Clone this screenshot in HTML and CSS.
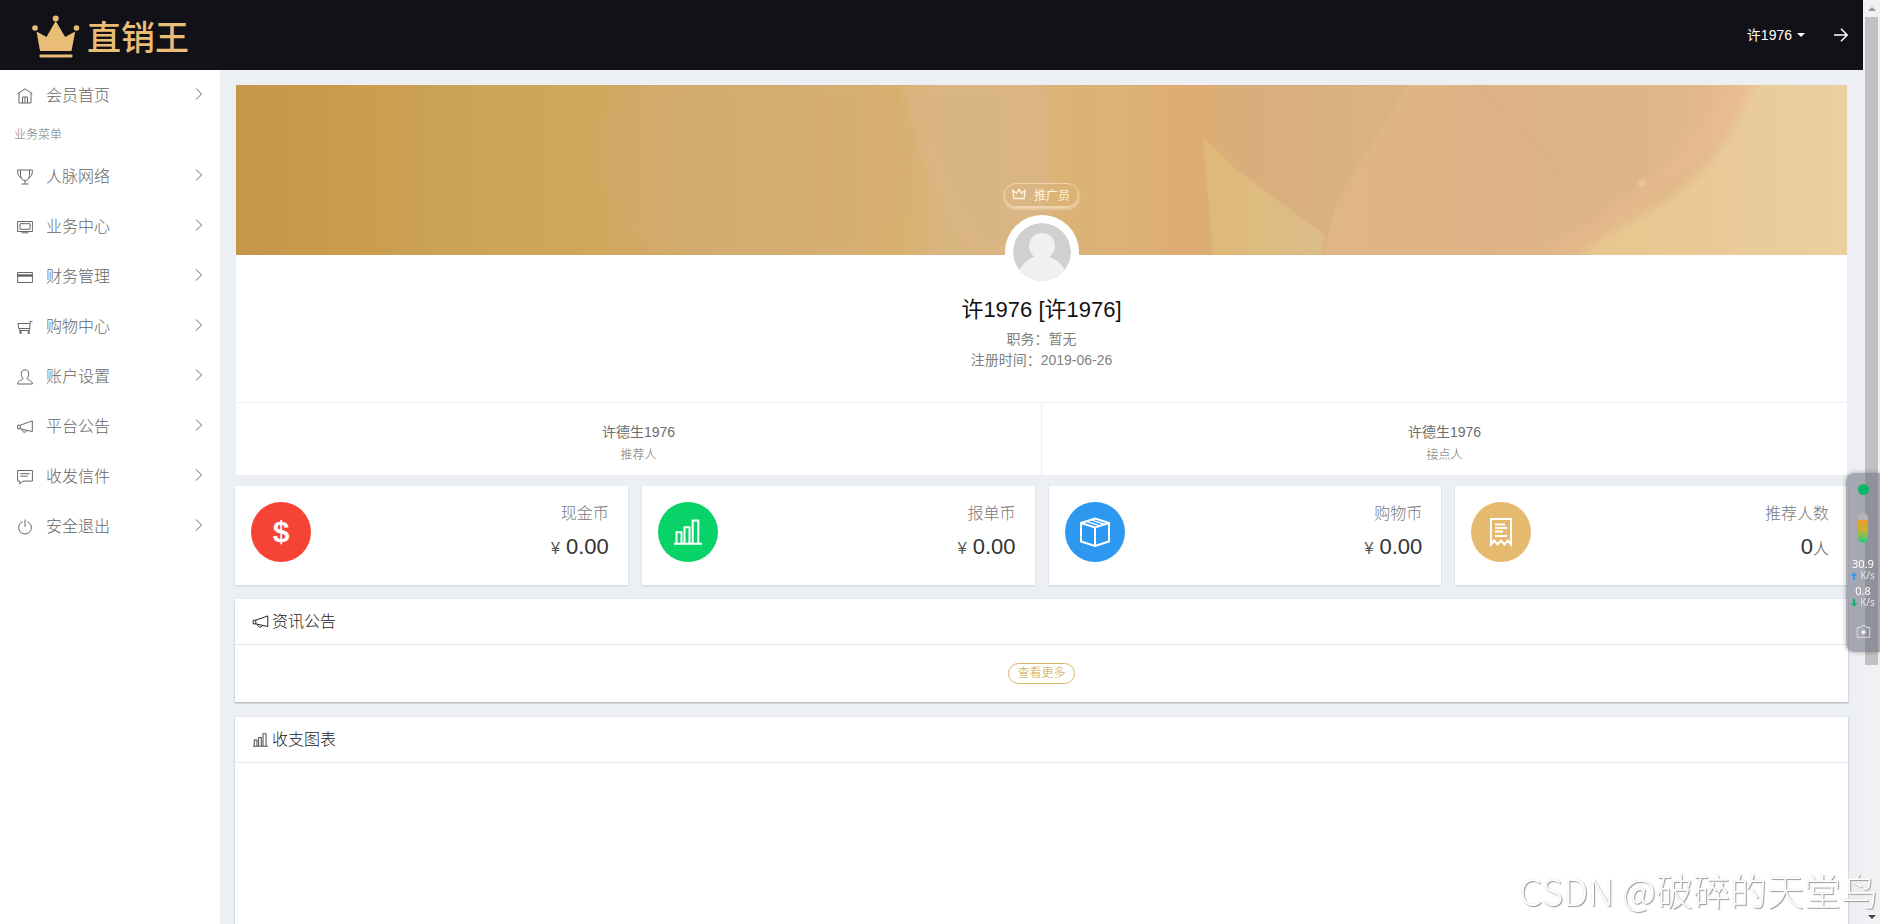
FILE: index.html
```html
<!DOCTYPE html>
<html lang="zh-CN">
<head>
<meta charset="utf-8">
<title>直销王</title>
<link rel="stylesheet" href="styles.css">
</head>
<body>
<svg class="defs" width="0" height="0" aria-hidden="true">
  <symbol id="chevron" viewBox="0 0 8 14"><path d="M1 1.500l5.500 5.500L1 12.500"/></symbol>
  <symbol id="horn" viewBox="0 0 16 14"><path d="M.7 5.200h2.600L15.300.9v10.600L3.300 8.900H.7zM3.300 5.200v3.700M5 9.500c.2 2 1.500 3 3.200 2.600 1-.3 1.500-.8 1.700-1.500"/></symbol>
  <symbol id="bars" viewBox="0 0 28 26"><path d="M0 24.700h28M2.500 24V13.200h5V24M10.500 24V8.200h5V24M18.700 24V1.500h5.600V24"/></symbol>
</svg>
<div class="window">
  <div class="app">
    <header class="topbar">
      <a class="brand" href="#">
        <svg class="crown" viewBox="0 0 48 44"><path d="M8 36L4.500 16.500 14.500 22 23.700 6l9.500 16 10-5.500L39.500 36z"/><circle cx="23.700" cy="3.500" r="3"/><circle cx="3" cy="13" r="2.800"/><circle cx="44.500" cy="13" r="2.800"/><rect x="7.500" y="39.500" width="33" height="3" rx="1"/></svg>
        <span>直销王</span>
      </a>
      <nav class="top-actions">
        <button class="user" type="button">许1976<i class="caret"></i></button>
        <button class="arrow" type="button" aria-label="展开"><svg viewBox="0 0 14 14"><path d="M0 7h13M7 .8L13.200 7 7 13.200"/></svg></button>
      </nav>
    </header>
    <div class="body">
      <aside class="sidebar">
        <a class="item home" href="#"><svg class="ico" viewBox="0 0 16 16"><path d="M.6 5.800L8 .8l7.400 5M2 5v10h12V5M5.500 15V9h5v6M8 9v6"/></svg><span>会员首页</span><svg class="chev"><use href="#chevron"/></svg></a>
        <h2 class="group">业务菜单</h2>
        <a class="item" href="#"><svg class="ico" viewBox="0 0 16 16"><path d="M3.500 1h9v5.500c0 3-2 5-4.500 5s-4.500-2-4.500-5zM3.500 1H.6c0 4 .8 7 4.400 8M12.500 1h2.900c0 4-.8 7-4.400 8M8 11.500V15M4.500 15h7"/></svg><span>人脉网络</span><svg class="chev"><use href="#chevron"/></svg></a>
        <a class="item" href="#"><svg class="ico" viewBox="0 0 16 16"><path d="M.6 2.500h14.800v10H.6zM3 4.700h10v5.600H3zM4.500 13.800h7"/></svg><span>业务中心</span><svg class="chev"><use href="#chevron"/></svg></a>
        <a class="item" href="#"><svg class="ico" viewBox="0 0 16 16"><path d="M.6 3.500h14.800v10H.6z"/><path d="M.6 6.500h14.800" stroke-width="2.500"/></svg><span>财务管理</span><svg class="chev"><use href="#chevron"/></svg></a>
        <a class="item" href="#"><svg class="ico" viewBox="0 0 16 16"><path d="M15.500 2.500h-2.200L12.500 11.500H2.800M.8 4.500h12.200M1 4.500l.8 5h10.800M2.800 9.500v3"/><path d="M2.500 13.500h2.200M10.700 13.500h2.200" stroke-width="2.400"/></svg><span>购物中心</span><svg class="chev"><use href="#chevron"/></svg></a>
        <a class="item" href="#"><svg class="ico" viewBox="0 0 16 16"><path d="M6 9.500C4.500 8 4.300 6 4.300 4.500 4.300 2 5.800.8 8 .8s3.700 1.200 3.700 3.700c0 1.500-.2 3.500-1.700 5 0 1.500 5.200 1.500 5.400 5.500H.6C.8 11 6 11 6 9.500z"/></svg><span>账户设置</span><svg class="chev"><use href="#chevron"/></svg></a>
        <a class="item" href="#"><svg class="ico horn"><use href="#horn"/></svg><span>平台公告</span><svg class="chev"><use href="#chevron"/></svg></a>
        <a class="item" href="#"><svg class="ico" viewBox="0 0 16 16"><path d="M.6 1.500h14.800v10.600H6L2.800 15v-2.900H.6zM3.300 4.700h9.400M3.300 7.200h7.500"/></svg><span>收发信件</span><svg class="chev"><use href="#chevron"/></svg></a>
        <a class="item" href="#"><svg class="ico" viewBox="0 0 16 16"><path d="M5.500 2.700a6.400 6.400 0 1 0 5 0M8 .5v7.500"/></svg><span>安全退出</span><svg class="chev"><use href="#chevron"/></svg></a>
      </aside>
      <main class="main">
        <section class="profile">
          <div class="hero">
            <svg class="hero-art" viewBox="0 0 1611 170" preserveAspectRatio="none" aria-hidden="true">
              <defs>
                <linearGradient id="base" x1="0" x2="1" y1="0" y2="0">
                  <stop offset="0" stop-color="#c4964a"/><stop offset=".07" stop-color="#ca9c4d"/><stop offset=".15" stop-color="#cca45a"/><stop offset=".22" stop-color="#d0a75b"/><stop offset=".28" stop-color="#d2ab6c"/><stop offset=".36" stop-color="#d5af73"/><stop offset=".41" stop-color="#d8b16e"/><stop offset=".44" stop-color="#d9b580"/><stop offset=".5" stop-color="#dbb57f"/><stop offset=".505" stop-color="#dbb376"/><stop offset=".55" stop-color="#dcb277"/><stop offset=".59" stop-color="#deac73"/><stop offset=".63" stop-color="#d9ae7c"/><stop offset=".7" stop-color="#dab181"/><stop offset="1" stop-color="#e3bc8e"/>
                </linearGradient>
                <linearGradient id="spike" x1="0" x2="1" y1="0" y2="0"><stop offset="0" stop-color="#dfb977"/><stop offset="1" stop-color="#ddbd89"/></linearGradient>
                <linearGradient id="skin" x1="0" x2="1" y1="0" y2="0"><stop offset="0" stop-color="#e0b687"/><stop offset=".3" stop-color="#deb486"/><stop offset=".6" stop-color="#deb587"/><stop offset=".82" stop-color="#e8bd90"/><stop offset="1" stop-color="#e9bf8e"/></linearGradient>
                <linearGradient id="light" x1="0" x2="1" y1="0" y2="0"><stop offset="0" stop-color="#e7c78a"/><stop offset=".5" stop-color="#e9ca98"/><stop offset="1" stop-color="#ecd0a2"/></linearGradient>
                <filter id="soft"><feGaussianBlur stdDeviation="5"/></filter>
                <filter id="edge"><feGaussianBlur stdDeviation="1"/></filter>
              </defs>
              <rect width="1611" height="170" fill="url(#base)"/>
              <path d="M380 0C350 60 355 130 420 170H640C700 120 690 50 665 0z" fill="#d5ab75" opacity=".3" filter="url(#soft)"/>
              <path d="M665 0C680 60 705 130 745 170H820L808 0z" fill="#dcb78b" opacity=".45" filter="url(#soft)"/>
              <path d="M967 52L1000 84 1089 150 1085 170H977z" fill="url(#spike)" filter="url(#edge)"/>
              <path d="M1170 0C1150 40 1125 75 1110 100S1094 145 1088 172H1620V-2z" fill="url(#skin)"/>
              <path d="M1240 0C1290 40 1330 90 1350 140" fill="none" stroke="#d4a97c" stroke-width="8" opacity=".2" filter="url(#soft)"/>
              <path d="M1490 0C1470 50 1420 100 1300 170H1360L1540 0z" fill="#efc093" opacity=".35" filter="url(#soft)"/>
              <path d="M1526 -20C1500 40 1480 80 1440 108S1360 148 1330 190H1640V-20z" fill="url(#light)" filter="url(#soft)"/>
              <circle cx="1406" cy="98" r="4" fill="#efcd9c" opacity=".7" filter="url(#edge)"/>
            </svg>
            <div class="badge"><svg viewBox="0 0 14 12"><path d="M1.800 10.500L1 2.500l3.500 2.700L7 1.300l2.500 3.900L13 2.500l-.8 8z"/></svg>推广员</div>
          </div>
          <svg class="avatar" viewBox="0 0 58 58" role="img" aria-label="头像"><clipPath id="round"><circle cx="29" cy="29" r="29"/></clipPath><g clip-path="url(#round)"><rect width="58" height="58" fill="#d0d0d0"/><ellipse cx="29" cy="54" rx="24" ry="21" fill="#f0f0f0"/><circle cx="29" cy="23" r="13" fill="#f0f0f0"/></g></svg>
          <h1 class="name">许1976 [许1976]</h1>
          <p class="meta">职务：暂无</p>
          <p class="meta">注册时间：2019-06-26</p>
          <div class="relations">
            <div><strong>许德生1976</strong><small>推荐人</small></div>
            <div><strong>许德生1976</strong><small>接点人</small></div>
          </div>
        </section>
        <section class="stats">
          <article class="stat"><div class="disc red">$</div><div class="figures"><h3>现金币</h3><p><span>¥</span> 0.00</p></div></article>
          <article class="stat"><div class="disc green"><svg width="28" height="26"><use href="#bars"/></svg></div><div class="figures"><h3>报单币</h3><p><span>¥</span> 0.00</p></div></article>
          <article class="stat"><div class="disc blue"><svg width="30" height="30" viewBox="0 0 30 30"><path d="M15 1.500L29 6v18.500L15 29 1 24.500V6zM1 6L15 10.500 29 6M15 10.500V29"/><path d="M6.500 4.300L20 8.800M11 2.800L24.500 7.300" stroke-width="1.400"/></svg></div><div class="figures"><h3>购物币</h3><p><span>¥</span> 0.00</p></div></article>
          <article class="stat"><div class="disc gold"><svg width="24" height="30" viewBox="0 0 24 30"><path d="M2 27.500V2h20v25.500l-3.300-4-3.300 4-3.400-4-3.400 4-3.300-4zM6 7.500h10M6 11h12M6 14.500h8M6 19h12"/></svg></div><div class="figures"><h3>推荐人数</h3><p>0<span>人</span></p></div></article>
        </section>
        <section class="panel">
          <h2><svg width="17" height="14"><use href="#horn"/></svg>资讯公告</h2>
          <div class="panel-body"><a class="more" href="#">查看更多</a></div>
        </section>
        <section class="panel chart">
          <h2><svg width="17" height="14"><use href="#bars"/></svg>收支图表</h2>
        </section>
      </main>
    </div>
  </div>
  <div class="scroll" aria-hidden="true"><i class="up"></i><i class="thumb"></i><i class="down"></i></div>
</div>
<aside class="monitor">
  <i class="dot"></i>
  <i class="tube"></i>
  <div class="rates">
    <b>30.9</b><span><svg viewBox="0 0 6 8"><path d="M3 0l3 4H4v4H2V4H0z" fill="#2f9be8"/></svg>K/s</span>
    <b>0.8</b><span><svg viewBox="0 0 6 8"><path d="M3 8l3-4H4V0H2v4H0z" fill="#12b268"/></svg>K/s</span>
  </div>
  <svg class="camera" viewBox="0 0 14 13"><path d="M.7 2.500h3.500l1-1.800h3.600l1 1.800h3.500v9.800H.7z"/><circle cx="7" cy="7.200" r="1.800"/></svg>
</aside>
<div class="watermark">CSDN @破碎的天堂鸟</div>
</body>
</html>
```
FILE: styles.css
```css
* { box-sizing: border-box; }
body, h1, h2, h3, p { margin: 0; font-weight: 300; }
body { font-family: "Liberation Sans", "Noto Sans CJK SC", sans-serif; font-size: 14px; color: #707070; overflow: hidden; }
a { color: inherit; text-decoration: none; }
button { font: inherit; color: inherit; background: none; border: 0; padding: 0; }
svg { fill: none; stroke: currentColor; }
.defs { position: absolute; }
.window { display: flex; height: 100vh; }
.app { flex: 1; min-width: 0; display: flex; flex-direction: column; }

.topbar { flex: none; height: 70px; background: #131118; color: #fff; display: flex; align-items: center; justify-content: space-between; padding: 0 15px 0 32px; }
.brand { display: flex; align-items: center; gap: 7px; padding-top: 3px; color: #e9bd76; font-size: 34px; font-weight: 500; line-height: 44px; }
.brand span { padding-top: 2px; }
.crown { width: 48px; height: 44px; fill: #e9bd76; stroke: none; }
.top-actions { display: flex; align-items: center; gap: 29px; }
.user { display: flex; align-items: center; gap: 5px; line-height: 20px; font-weight: 400; }
.caret { border: 4px solid transparent; border-top-color: #fff; border-bottom: 0; }
.arrow svg { display: block; width: 14px; height: 14px; stroke-width: 1.4; }

.body { flex: 1; min-height: 0; display: flex; background: #ecf0f4; }
.sidebar { flex: none; width: 220px; background: #fff; }
.item { display: flex; align-items: center; height: 50px; padding: 0 17px; font-size: 16px; color: #666; }
.item.home { height: 48px; }
.item span { flex: 1; margin-left: 13px; }
.ico { width: 16px; height: 16px; margin-top: 3px; }
.ico.horn { height: 14px; }
.chev { width: 8px; height: 14px; }
.group { font-size: 12px; line-height: 30px; padding: 2px 0 0 14px; color: #777; }

.main { flex: 1; min-width: 0; padding: 15px 15px 0; overflow: hidden; }
.profile { background: #fff; margin: 0 1px 11px; text-align: center; }
.hero { height: 170px; position: relative; display: flex; justify-content: center; align-items: flex-end; padding-bottom: 48px; }
.hero-art { position: absolute; inset: 0; width: 100%; height: 100%; stroke: none; }
.badge { position: relative; display: flex; align-items: center; gap: 8px; height: 24px; padding: 0 8px 2px 7px; border: 1px solid #f0d3a8; border-radius: 12px; font-size: 12px; font-weight: 400; color: #fff3df; box-shadow: 0 2px 3px rgba(255, 240, 215, .6); }
.badge svg { width: 14px; height: 12px; stroke-width: 1.4; }
.avatar { position: relative; display: block; width: 74px; height: 74px; margin: -40px auto 6px; padding: 8px; background: #fff; border-radius: 50%; stroke: none; }
.name { font-size: 22px; font-weight: 400; line-height: 30px; margin-bottom: 4px; color: #111; }
.meta { line-height: 21px; font-weight: 400; color: #808080; }
.relations { display: flex; margin-top: 31px; border-top: 1px solid #eceef0; }
.relations div { flex: 1; display: flex; flex-direction: column; gap: 1px; padding: 18px 0 9px; line-height: 22px; }
.relations div + div { border-left: 1px solid #eceef0; }
.relations strong { font-weight: 400; color: #6c6c6c; }
.relations small { font-size: 12px; color: #707070; }

.stats { display: grid; grid-template-columns: repeat(4, 1fr); gap: 14px; margin-bottom: 14px; }
.stat { height: 99px; background: #fff; padding: 16px 19px 0 16px; display: flex; justify-content: space-between; box-shadow: 0 1px 2px rgba(0, 0, 0, .12); }
.disc { width: 60px; height: 60px; border-radius: 50%; display: grid; place-items: center; color: #fff; font-size: 30px; font-weight: 700; line-height: 60px; }
.disc svg { stroke-width: 2; }
.red { background: #f54336; }
.green { background: #08d369; }
.blue { background: #2d98f0; }
.gold { background: #e5ba6e; }
.figures { text-align: right; }
.figures h3 { font-size: 16px; line-height: 24px; color: #777; }
.figures p { margin-top: 6px; font-size: 22px; line-height: 30px; color: #333; }
.figures span { font-size: 16px; color: #555; }

.panel { background: #fff; margin-bottom: 15px; box-shadow: 0 1px 2px rgba(0, 0, 0, .3); }
.panel h2 { display: flex; align-items: center; gap: 3px; padding-left: 17px; font-size: 16px; line-height: 45px; color: #222; border-bottom: 1px solid #e8eaec; }
.panel h2 svg { stroke-width: 1; }
.chart h2 svg { stroke-width: 2; color: #555; }
.panel-body { display: flex; justify-content: center; padding: 18px 0; }
.more { border: 1px solid #d9b564; border-radius: 11px; padding: 0 8px; font-size: 12px; line-height: 19px; color: #cda548; }
.chart { height: 640px; }

.scroll { flex: none; width: 17px; background: #f1f1f1; display: flex; flex-direction: column; align-items: center; padding: 7px 0 5px; }
.up { border: 4px solid transparent; border-bottom-color: #999; border-top: 0; }
.thumb { width: 13px; height: 71%; margin-top: 6px; background: #c1c1c1; }
.down { margin-top: auto; border: 4px solid transparent; border-top-color: #444; border-bottom: 0; }

.monitor { position: fixed; right: 0; top: 473px; width: 34px; padding: 11px 0 14px; display: flex; flex-direction: column; align-items: center; background: rgba(100, 102, 116, .52); border-radius: 8px 0 0 8px; box-shadow: 0 0 5px rgba(0, 0, 0, .3); color: #fff; }
.dot { width: 11px; height: 11px; border-radius: 50%; background: #0ab767; }
.tube { width: 10px; height: 30px; margin: 18px 0 14px; border-radius: 5px; background: linear-gradient(#b3b3b8 0 24%, #ee9b27 24%, #c4b337 60%, #2fca7b 95%); }
.rates { display: flex; flex-direction: column; align-items: center; font: 10px/12px "Noto Sans", sans-serif; }
.rates b { font-size: 11px; font-weight: 400; line-height: 14px; }
.rates span { display: flex; align-items: center; gap: 3px; line-height: 9px; margin-bottom: 4px; color: #e3e3e6; }
.rates svg { width: 6px; height: 8px; stroke: none; }
.camera { width: 15px; height: 13px; margin-top: 14px; color: #dedee0; }
.camera circle { fill: #fff; }
.watermark { position: fixed; right: 2px; bottom: 8px; font: 37px/52px "Noto Sans CJK SC", sans-serif; font-weight: 300; color: #fff; text-shadow: 1px 1px 1px #999, 0 0 1px #ccc; white-space: nowrap; }
```
